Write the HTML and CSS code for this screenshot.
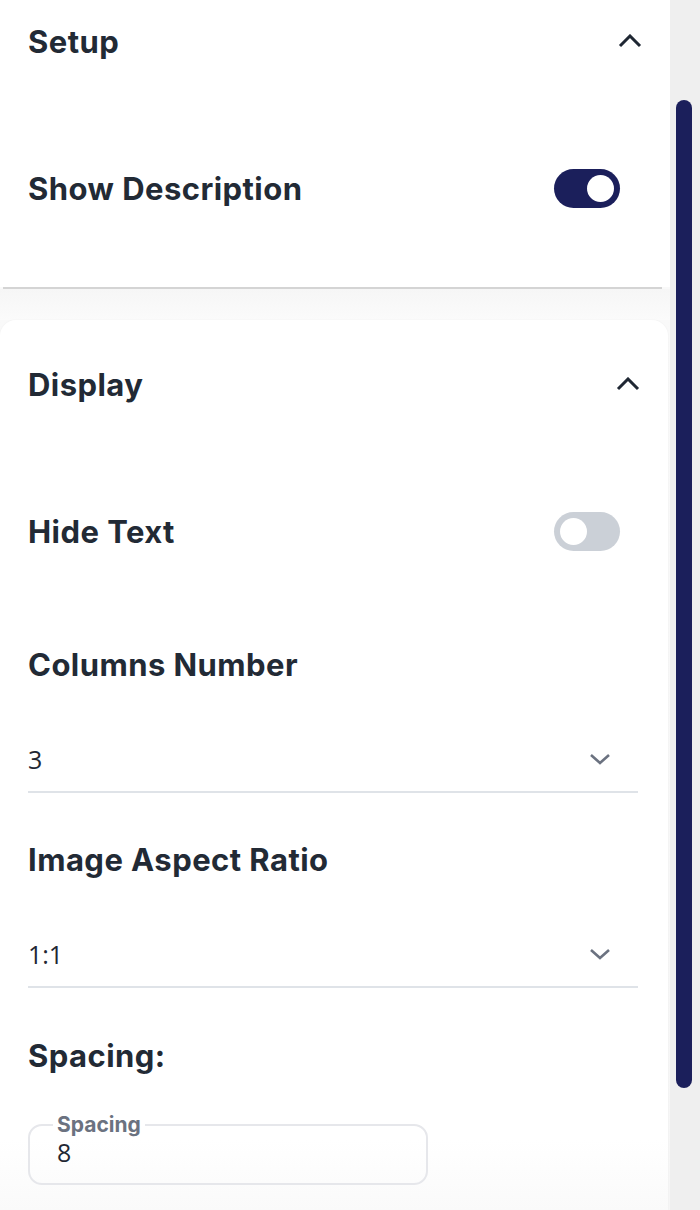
FILE: index.html
```html
<!DOCTYPE html>
<html>
<head>
<meta charset="utf-8">
<link rel="stylesheet" href="styles.css">
</head>
<body>
<div class="screen">
  <div class="panel">
    <section class="card card-setup">
      <div class="card-head">
        <h2 class="title">Setup</h2>
        <svg class="chev-up" width="24" height="14" viewBox="0 0 24 14"><path d="M2 12 L12 2 L22 12" fill="none" stroke="#1f2733" stroke-width="3"/></svg>
      </div>
      <div class="row">
        <span class="title">Show Description</span>
        <span class="toggle on"><span class="knob"></span></span>
      </div>
    </section>
    <div class="edge"></div>
    <div class="gap"></div>
    <section class="card card-display">
      <div class="card-head">
        <h2 class="title">Display</h2>
        <svg class="chev-up" width="24" height="14" viewBox="0 0 24 14"><path d="M2 12 L12 2 L22 12" fill="none" stroke="#1f2733" stroke-width="3"/></svg>
      </div>
      <div class="row">
        <span class="title">Hide Text</span>
        <span class="toggle off"><span class="knob"></span></span>
      </div>
      <div class="label label-cols title">Columns Number</div>
      <div class="select">
        <span class="value">3</span>
        <svg class="chev-down" width="24" height="14" viewBox="0 0 24 14"><path d="M3 3 L12 11 L21 3" fill="none" stroke="#6b7280" stroke-width="2.6"/></svg>
      </div>
      <div class="label label-ratio title">Image Aspect Ratio</div>
      <div class="select">
        <span class="value">1:1</span>
        <svg class="chev-down" width="24" height="14" viewBox="0 0 24 14"><path d="M3 3 L12 11 L21 3" fill="none" stroke="#6b7280" stroke-width="2.6"/></svg>
      </div>
      <div class="label label-spacing title">Spacing:</div>
      <fieldset class="field">
        <legend class="legend">Spacing</legend>
        <span class="value">8</span>
      </fieldset>
    </section>
  </div>
  <div class="track"><div class="thumb"></div></div>
</div>
</body>
</html>
```
FILE: styles.css
```css
* { box-sizing: border-box; }
html, body { margin: 0; padding: 0; }
body {
  width: 700px;
  height: 1210px;
  overflow: hidden;
  font-family: Inter, "Liberation Sans", sans-serif;
  color: #222a35;
  background: #f0f0f0;
}
.screen {
  display: flex;
  height: 1210px;
}
.panel {
  width: 670px;
  background: linear-gradient(#fafafa, #f6f6f6);
  display: flex;
  flex-direction: column;
}
.card {
  background: #fff;
  padding: 0 28px;
}
.card-setup {
  height: 287px;
}
.card-display {
  width: 668px;
  border-radius: 16px 16px 0 0;
  box-shadow: 0 0 2px rgba(0,0,0,0.06);
  padding-top: 23px;
  flex: 1;
  background: linear-gradient(#fff 0, #fff 820px, #fafafa 890px);
}
.edge {
  height: 2px;
  margin: 0 8px 0 3px;
  background: #d4d4d4;
}
.gap {
  height: 31px;
  background: linear-gradient(#f6f6f6, #fbfbfb);
}
.title {
  font-size: 31px;
  font-weight: 700;
  letter-spacing: 0.45px;
  margin: 0;
  color: #222a35;
}
.card-head {
  height: 82px;
  display: flex;
  align-items: center;
  justify-content: space-between;
}
.row {
  height: 80px;
  margin-top: 66px;
  display: flex;
  align-items: center;
  justify-content: space-between;
  padding-right: 22px;
}
.card-display .row {
  padding-right: 20px;
}
.toggle {
  width: 66px;
  height: 39px;
  border-radius: 20px;
  display: flex;
  align-items: center;
  padding: 0 6px;
}
.toggle .knob {
  width: 27px;
  height: 27px;
  border-radius: 50%;
  background: #fff;
}
.toggle.on {
  background: #1b1f5b;
  justify-content: flex-end;
}
.toggle.off {
  background: #cbd0d7;
  justify-content: flex-start;
}
.label {
  height: 40px;
  display: flex;
  align-items: center;
}
.label-cols { margin-top: 73px; }
.label-ratio { margin-top: 46px; }
.label-spacing { margin-top: 47px; }
.select {
  margin-top: 40px;
  width: 610px;
  height: 69px;
  border-bottom: 2px solid #dfe3e8;
  display: flex;
  align-items: center;
  justify-content: space-between;
  padding: 2px 26px 0 0;
}
.value {
  font-family: "Open Sans", Inter, sans-serif;
  font-size: 25px;
  font-weight: 400;
  color: #1f2733;
}
.field {
  margin: 40px 0 0 0;
  width: 400px;
  height: 70px;
  border: 2px solid #e6e7eb;
  border-radius: 14px;
  padding: 0 0 0 27px;
}
.legend {
  font-size: 21px;
  font-weight: 700;
  color: #6b7280;
  padding: 0 4px;
  margin-left: -4px;
  line-height: 20px;
}
.field .value {
  display: block;
  margin-top: 0;
}
.track {
  width: 30px;
  background: #efefef;
  padding: 100px 0 0 6px;
}
.thumb {
  width: 16px;
  height: 988px;
  border-radius: 8px;
  background: #1b1f5b;
}
```
